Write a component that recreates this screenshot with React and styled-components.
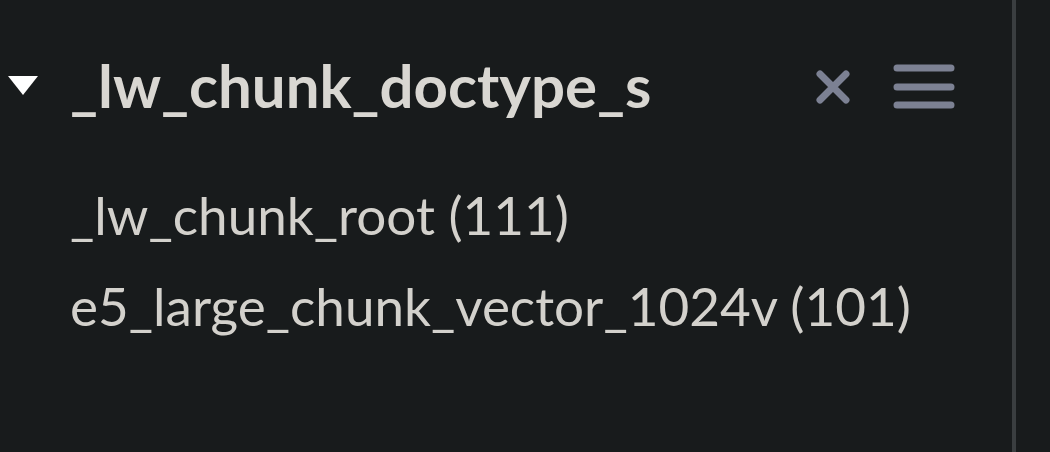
import React from 'react';
import styled, { createGlobalStyle } from 'styled-components';

const GlobalStyle = createGlobalStyle`
  html, body {
    margin: 0;
    padding: 0;
    background: #181b1c;
  }
  body {
    font-family: Lato, "Noto Sans", sans-serif;
  }
`;

const Page = styled.div`
  display: flex;
  width: 1050px;
  height: 452px;
  background: #181b1c;
  overflow: hidden;
`;

const Panel = styled.div`
  width: 1012px;
  display: flex;
  flex-direction: column;
`;

const Divider = styled.div`
  width: 4px;
  background: #3a3e40;
`;

const Header = styled.div`
  display: flex;
  align-items: center;
  height: 180px;
  padding: 0 0 10px 8px;
  box-sizing: border-box;
`;

const Caret = styled.span`
  width: 0;
  height: 0;
  border-left: 15px solid transparent;
  border-right: 15px solid transparent;
  border-top: 19px solid #ffffff;
  margin-right: 32px;
`;

const Title = styled.div`
  flex: 1;
  font-size: 60px;
  font-weight: 700;
  color: #d9d7d2;
`;

const IconButton = styled.button`
  background: none;
  border: none;
  padding: 0;
  margin-top: 3px;
  display: flex;
  align-items: center;
  justify-content: center;
  margin-right: ${p => p.$gap}px;
`;

const List = styled.div`
  display: flex;
  flex-direction: column;
  padding-left: 70px;
  margin-top: -11px;
`;

const Item = styled.div`
  font-size: 53px;
  font-weight: 400;
  color: #d3d1cc;
  line-height: 91px;
`;

export default function App() {
  return (
    <Page>
      <GlobalStyle />
      <Panel>
        <Header>
          <Caret />
          <Title>_lw_chunk_doctype_s</Title>
          <IconButton $gap={42}>
            <svg width="36" height="36" viewBox="0 0 36 36">
              <path d="M5 5 L31 31 M31 5 L5 31" stroke="#7c8193" strokeWidth="7" strokeLinecap="round" />
            </svg>
          </IconButton>
          <IconButton $gap={57}>
            <svg width="62" height="46" viewBox="0 0 62 46">
              <path d="M4 4 H58 M4 23 H58 M4 41 H58" stroke="#7c8193" strokeWidth="7" strokeLinecap="round" />
            </svg>
          </IconButton>
        </Header>
        <List>
          <Item>_lw_chunk_root (111)</Item>
          <Item>e5_large_chunk_vector_1024v (101)</Item>
        </List>
      </Panel>
      <Divider />
    </Page>
  );
}
